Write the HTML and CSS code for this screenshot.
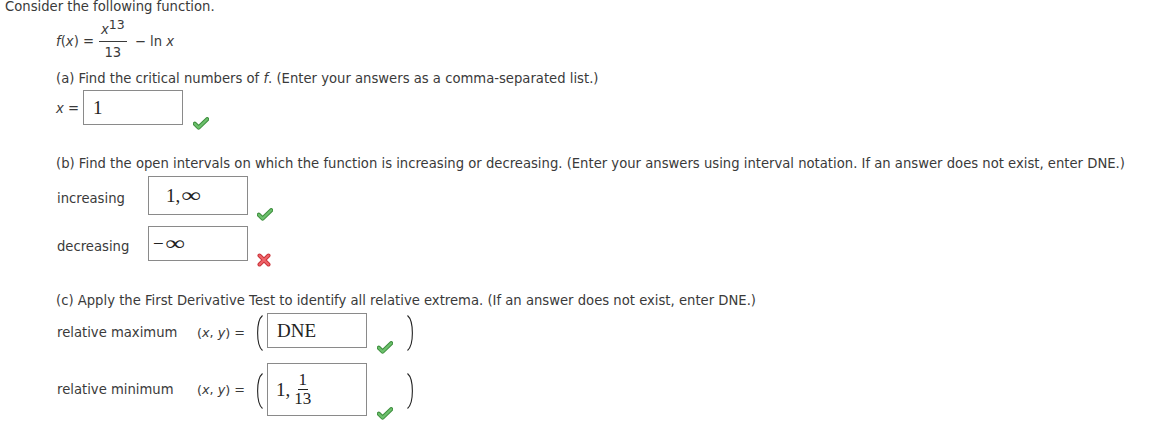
FILE: index.html
```html
<!DOCTYPE html>
<html>
<head>
<meta charset="utf-8">
<link rel="stylesheet" href="styles.css">
</head>
<body>
<div class="page">
  <div class="intro">Consider the following function.</div>

  <div class="func">
    <span class="m"><i>f</i>(<i>x</i>) =</span>
    <span class="frac">
      <span class="num"><i>x</i><sup>13</sup></span>
      <span class="den">13</span>
    </span>
    <span class="m tail">− ln <i>x</i></span>
  </div>

  <div class="q qa">(a) Find the critical numbers of <i>f</i>. (Enter your answers as a comma-separated list.)</div>
  <div class="row ra">
    <span class="lbl lbl-x"><i>x</i> =</span>
    <div class="box b1"><span class="ans">1</span></div>
    <svg class="mark chk ca" width="16" height="13" viewBox="0 0 16 13"><path d="M1.8 6.8 L5.6 10.6 L14.2 2.2" fill="none" stroke="#3e8e3e" stroke-width="4.2" stroke-linecap="round" stroke-linejoin="round"/><path d="M1.8 6.8 L5.6 10.6 L14.2 2.2" fill="none" stroke="#6cc06c" stroke-width="2.2" stroke-linecap="round" stroke-linejoin="round"/></svg>
  </div>

  <div class="q qb">(b) Find the open intervals on which the function is increasing or decreasing. (Enter your answers using interval notation. If an answer does not exist, enter DNE.)</div>
  <div class="row rb1">
    <span class="lbl lbl-b">increasing</span>
    <div class="box b2"><span class="ans">1,<span class="inf">∞</span></span></div>
    <svg class="mark chk cb" width="16" height="13" viewBox="0 0 16 13"><path d="M1.8 6.8 L5.6 10.6 L14.2 2.2" fill="none" stroke="#3e8e3e" stroke-width="4.2" stroke-linecap="round" stroke-linejoin="round"/><path d="M1.8 6.8 L5.6 10.6 L14.2 2.2" fill="none" stroke="#6cc06c" stroke-width="2.2" stroke-linecap="round" stroke-linejoin="round"/></svg>
  </div>
  <div class="row rb2">
    <span class="lbl lbl-b">decreasing</span>
    <div class="box b3"><span class="ans"><span class="minus">−</span><span class="inf">∞</span></span></div>
    <svg class="mark xm" width="14" height="14" viewBox="0 0 14 14"><path d="M2.5 2.5 L11.5 11.5 M11.5 2.5 L2.5 11.5" fill="none" stroke="#c9343a" stroke-width="4" stroke-linecap="round"/><path d="M2.5 2.5 L11.5 11.5 M11.5 2.5 L2.5 11.5" fill="none" stroke="#f0646a" stroke-width="2" stroke-linecap="round"/></svg>
  </div>

  <div class="q qc">(c) Apply the First Derivative Test to identify all relative extrema. (If an answer does not exist, enter DNE.)</div>
  <div class="row rc1">
    <span class="lbl lbl-c">relative maximum</span>
    <span class="xy">(<i>x</i>, <i>y</i>) =</span>
    <svg class="paren" width="9" height="36" viewBox="0 0 9 36"><path d="M7.5 0.5 C1 6 1 30 7.5 35.5" fill="none" stroke="#222" stroke-width="1.1"/></svg>
    <div class="box b4"><span class="ans">DNE</span></div>
    <svg class="mark chk cc1" width="16" height="13" viewBox="0 0 16 13"><path d="M1.8 6.8 L5.6 10.6 L14.2 2.2" fill="none" stroke="#3e8e3e" stroke-width="4.2" stroke-linecap="round" stroke-linejoin="round"/><path d="M1.8 6.8 L5.6 10.6 L14.2 2.2" fill="none" stroke="#6cc06c" stroke-width="2.2" stroke-linecap="round" stroke-linejoin="round"/></svg>
    <svg class="paren rp" width="9" height="36" viewBox="0 0 9 36"><path d="M1.5 0.5 C8 6 8 30 1.5 35.5" fill="none" stroke="#222" stroke-width="1.1"/></svg>
  </div>
  <div class="row rc2">
    <span class="lbl lbl-c">relative minimum</span>
    <span class="xy">(<i>x</i>, <i>y</i>) =</span>
    <svg class="paren" width="9" height="36" viewBox="0 0 9 36"><path d="M7.5 0.5 C1 6 1 30 7.5 35.5" fill="none" stroke="#222" stroke-width="1.1"/></svg>
    <div class="box b5">
      <span class="ans">1,</span>
      <span class="sfrac"><span class="snum">1</span><span class="sden">13</span></span>
    </div>
    <svg class="mark chk cc2" width="16" height="13" viewBox="0 0 16 13"><path d="M1.8 6.8 L5.6 10.6 L14.2 2.2" fill="none" stroke="#3e8e3e" stroke-width="4.2" stroke-linecap="round" stroke-linejoin="round"/><path d="M1.8 6.8 L5.6 10.6 L14.2 2.2" fill="none" stroke="#6cc06c" stroke-width="2.2" stroke-linecap="round" stroke-linejoin="round"/></svg>
    <svg class="paren rp" width="9" height="36" viewBox="0 0 9 36"><path d="M1.5 0.5 C8 6 8 30 1.5 35.5" fill="none" stroke="#222" stroke-width="1.1"/></svg>
  </div>
</div>
</body>
</html>
```

FILE: styles.css
```css
html, body {
  margin: 0;
  padding: 0;
  background: #ffffff;
}
.page {
  padding-left: 5px;
  padding-bottom: 20px;
  font-family: "DejaVu Sans", Verdana, sans-serif;
  font-size: 13.2px;
  color: #3a3a3a;
}
.intro {
  line-height: 14px;
}
.func {
  margin-top: 7px;
  margin-left: 51px;
  display: flex;
  align-items: center;
  line-height: 18px;
}
.m i, .q i, .lbl i, .xy i {
  font-style: italic;
}
.frac {
  display: inline-flex;
  flex-direction: column;
  align-items: center;
  margin-left: 5px;
}
.num {
  padding: 0 2px 2px;
  border-bottom: 1px solid #3a3a3a;
  line-height: 18px;
}
.num sup {
  font-size: 12.5px;
  vertical-align: 5px;
  line-height: 0;
}
.den {
  padding-top: 2px;
  line-height: 18px;
}
.tail {
  margin-left: 8px;
}
.q {
  line-height: 14px;
}
.qa { margin-top: 10px; margin-left: 51px; }
.qb { margin-top: 32px; margin-left: 51px; }
.qc { margin-top: 33px; margin-left: 51px; }
.row {
  display: flex;
  align-items: flex-start;
  margin-left: 51px;
}
.ra { margin-top: 4px; }
.rb1 { margin-top: 5px; margin-left: 52px; }
.rb2 { margin-top: 11px; margin-left: 52px; }
.rc1 { margin-top: 5px; margin-left: 52px; }
.rc2 { margin-top: 12px; margin-left: 52px; }
.lbl {
  line-height: 14px;
}
.lbl-x { width: 27px; margin-top: 12px; }
.lbl-b { width: 91px; }
.rb1 .lbl-b { margin-top: 16px; }
.rb2 .lbl-b { margin-top: 14px; }
.lbl-c { width: 140px; }
.rc1 .lbl-c, .rc1 .xy { margin-top: 13px; }
.rc2 .lbl-c, .rc2 .xy { margin-top: 20px; }
.xy {
  line-height: 14px;
  width: 58px;
  font-size: 12.8px;
}
.box {
  box-sizing: border-box;
  width: 100px;
  border: 1px solid #8a8a8a;
  display: flex;
  align-items: center;
  font-family: "Liberation Serif", "DejaVu Serif", serif;
  color: #222;
}
.ans {
  font-size: 19px;
  line-height: 20px;
  white-space: nowrap;
}
.inf {
  display: inline-block;
  transform: scale(1.45, 1.05);
  margin-left: 4px;
  margin-right: 3px;
}
.minus {
  margin-right: 0;
}
.b1 { height: 35px; padding-left: 9px; }
.b2 { height: 39px; padding-left: 17px; }
.b3 { height: 35px; padding-left: 4px; }
.b4 { height: 35px; padding-left: 9px; }
.b5 { height: 53px; padding-left: 8px; }
.b4 .ans { font-size: 19px; }
.sfrac {
  display: inline-flex;
  flex-direction: column;
  align-items: center;
  margin-left: 4px;
  font-size: 17px;
  line-height: 14px;
}
.snum {
  padding: 0 1px 2px;
  border-bottom: 1px solid #222;
}
.sden {
  padding-top: 2px;
}
.mark {
  display: block;
  flex: none;
}
.ca { margin-left: 10px; margin-top: 27px; margin-bottom: -10px; }
.cb { margin-left: 9px; margin-top: 32px; margin-bottom: -10px; }
.xm { margin-left: 9px; margin-top: 27px; margin-bottom: -10px; }
.cc1 { margin-left: 10px; margin-top: 28px; margin-bottom: -10px; }
.cc2 { margin-left: 10px; margin-top: 44px; margin-bottom: -10px; }
.paren {
  display: block;
  flex: none;
  margin-right: 3px;
}
.rc1 .paren { margin-top: 2px; }
.rc2 .paren { margin-top: 10px; }
.rp { margin-left: 13px; margin-right: 0; }
```
